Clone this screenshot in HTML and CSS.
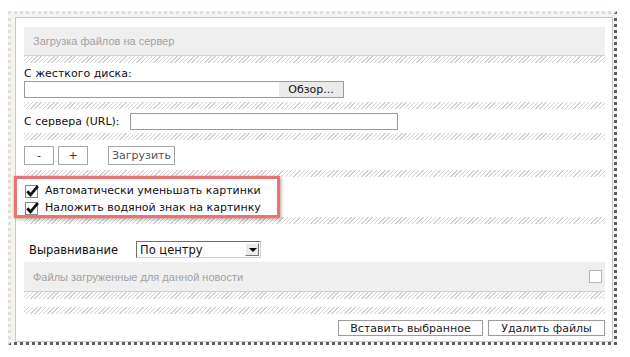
FILE: index.html
```html
<!DOCTYPE html>
<html lang="ru">
<head>
    <meta charset="UTF-8" />
    <title>Загрузка файлов на сервер</title>
    <link rel="stylesheet" href="styles.css">
</head>
<body>
    <div class="sheet">
        <div class="panel">

            <div class="bar">Загрузка файлов на сервер</div>
            <div class="hatch"></div>

            <div class="label">С жесткого диска:</div>
            <div class="file">
                <span class="file-path"></span>
                <span class="file-btn">Обзор...</span>
            </div>
            <div class="hatch gap4"></div>

            <div class="row url-row">
                <span class="url-label">С сервера (URL):</span>
                <input class="text" type="text">
            </div>
            <div class="hatch gap3"></div>

            <div class="row buttons">
                <button class="btn small">-</button>
                <button class="btn small">+</button>
                <button class="btn upload">Загрузить</button>
            </div>
            <div class="hatch gap5"></div>

            <!-- options, highlighted -->
            <div class="checks">
                <div class="check">
                    <svg width="15" height="14" viewBox="0 0 15 14">
                        <rect x="0.5" y="1.5" width="12" height="12" fill="#fff" stroke="#8a8a8a"/>
                        <path d="M2.3 7.3 L5.5 10.8 L12.8 2.2" fill="none" stroke="#111" stroke-width="2.8"/>
                    </svg>
                    Автоматически уменьшать картинки
                </div>
                <div class="check">
                    <svg width="15" height="14" viewBox="0 0 15 14">
                        <rect x="0.5" y="1.5" width="12" height="12" fill="#fff" stroke="#8a8a8a"/>
                        <path d="M2.3 7.3 L5.5 10.8 L12.8 2.2" fill="none" stroke="#111" stroke-width="2.8"/>
                    </svg>
                    Наложить водяной знак на картинку
                </div>
                <div class="marker"></div>
            </div>
            <div class="hatch"></div>

            <div class="row align-row">
                <span class="align-label">Выравнивание</span>
                <span class="select">
                    <span class="select-value">По центру</span>
                    <span class="select-arrow"></span>
                </span>
            </div>

            <div class="bar bar-files">
                Файлы загруженные для данной новости
                <span class="box"></span>
            </div>
            <div class="hatch"></div>
            <div class="hatch gap8"></div>

            <div class="row actions">
                <button class="btn insert">Вставить выбранное</button>
                <button class="btn remove">Удалить файлы</button>
            </div>

        </div>
    </div>
</body>
</html>
```

FILE: styles.css
```css
body {
    margin: 0;
    font-family: "DejaVu Sans", Verdana, sans-serif;
    font-size: 11px;
    color: #111;
    background: #fff;
}

/* torn paper edge */
.sheet {
    width: 598px;
    margin: 11px 0 0 8px;
    padding: 3px 1px 0 4px;
    background: #f6f4f0;
    border: 3px dotted #e2ddd5;
    border-right: 3px dotted #5e5e5e;
    border-bottom: 3px dotted #5e5e5e;
}

.panel {
    position: relative;
    background: #fff;
    border: 1px solid #c9c9c9;
    padding: 9px 7px 5px 8px;
}

.bar {
    height: 28px;
    line-height: 29px;
    padding-left: 9px;
    background: #efefef;
    border-bottom: 1px solid #d2d2d2;
    color: #a3a3a3;
    font-family: "Liberation Sans", Arial, sans-serif;
    font-size: 11px;
}

.hatch {
    height: 7px;
    background: repeating-linear-gradient(135deg, #d2d2d2 0 1px, #fff 1px 3px);
}

.gap3 { margin-top: 3px; }
.gap4 { margin-top: 4px; }
.gap5 { margin-top: 5px; }
.gap8 { margin-top: 8px; }

.label {
    height: 18px;
    line-height: 22px;
}

.file {
    display: flex;
    width: 318px;
    height: 15px;
    border: 1px solid #9a9a9a;
}

.file-path {
    flex: 1;
}

.file-btn {
    width: 64px;
    text-align: center;
    line-height: 15px;
    background: #ece9e9;
}

.row {
    display: flex;
    align-items: center;
}

.url-row {
    margin-top: 4px;
    height: 17px;
}

.url-label {
    width: 106px;
}

.text {
    width: 262px;
    height: 13px;
    margin: 0;
    padding: 1px 2px;
    border: 1px solid #9a9a9a;
    font: inherit;
}

.btn {
    height: 19px;
    margin: 0;
    padding: 0;
    background: #fff;
    border: 1px solid #a6a6a6;
    font-family: "DejaVu Sans", Verdana, sans-serif;
    font-size: 11px;
    color: #333;
}

.buttons {
    margin-top: 6px;
    gap: 4px;
}

.small {
    width: 30px;
}

.upload {
    width: 67px;
    margin-left: 16px;
    color: #555;
}

.checks {
    position: relative;
    padding: 5px 0 1px 1px;
}

.check {
    display: flex;
    align-items: center;
    gap: 5px;
    height: 17px;
}

/* red annotation frame */
.marker {
    position: absolute;
    left: -10px;
    top: -1px;
    width: 260px;
    height: 36px;
    border: 3px solid #ea7474;
    box-shadow: 0 0 2px rgba(230, 90, 90, 0.6), 2px 2px 3px rgba(0, 0, 0, 0.2);
}

.align-row {
    margin-top: 17px;
    height: 17px;
}

.align-label {
    width: 107px;
    padding-left: 5px;
    font-size: 11.5px;
}

.select {
    display: flex;
    align-items: center;
    width: 123px;
    height: 15px;
    border: 1px solid #6d6d6d;
    border-right-color: #d0d0d0;
    border-bottom-color: #d0d0d0;
}

.select-value {
    flex: 1;
    padding-left: 3px;
    font-size: 11.5px;
}

.select-arrow {
    position: relative;
    width: 14px;
    height: 13px;
    margin-right: 1px;
    background: #ece9e9;
    border: 1px solid #fff;
    border-right-color: #777;
    border-bottom-color: #777;
    box-sizing: border-box;
}

.select-arrow::after {
    content: "";
    position: absolute;
    left: 3px;
    top: 4px;
    border: 4px solid transparent;
    border-top: 4px solid #000;
    border-bottom: 0;
}

.bar-files {
    position: relative;
    margin-top: 4px;
    height: 29px;
    line-height: 30px;
}

.box {
    position: absolute;
    right: 3px;
    top: 8px;
    width: 11px;
    height: 11px;
    background: #fff;
    border: 1px solid #b5b5b5;
}

.actions {
    justify-content: flex-end;
    gap: 5px;
    margin-top: 6px;
}

.actions .btn {
    height: 16px;
    border-color: #9a9a9a;
    color: #222;
}

.insert {
    width: 145px;
}

.remove {
    width: 117px;
}
```
